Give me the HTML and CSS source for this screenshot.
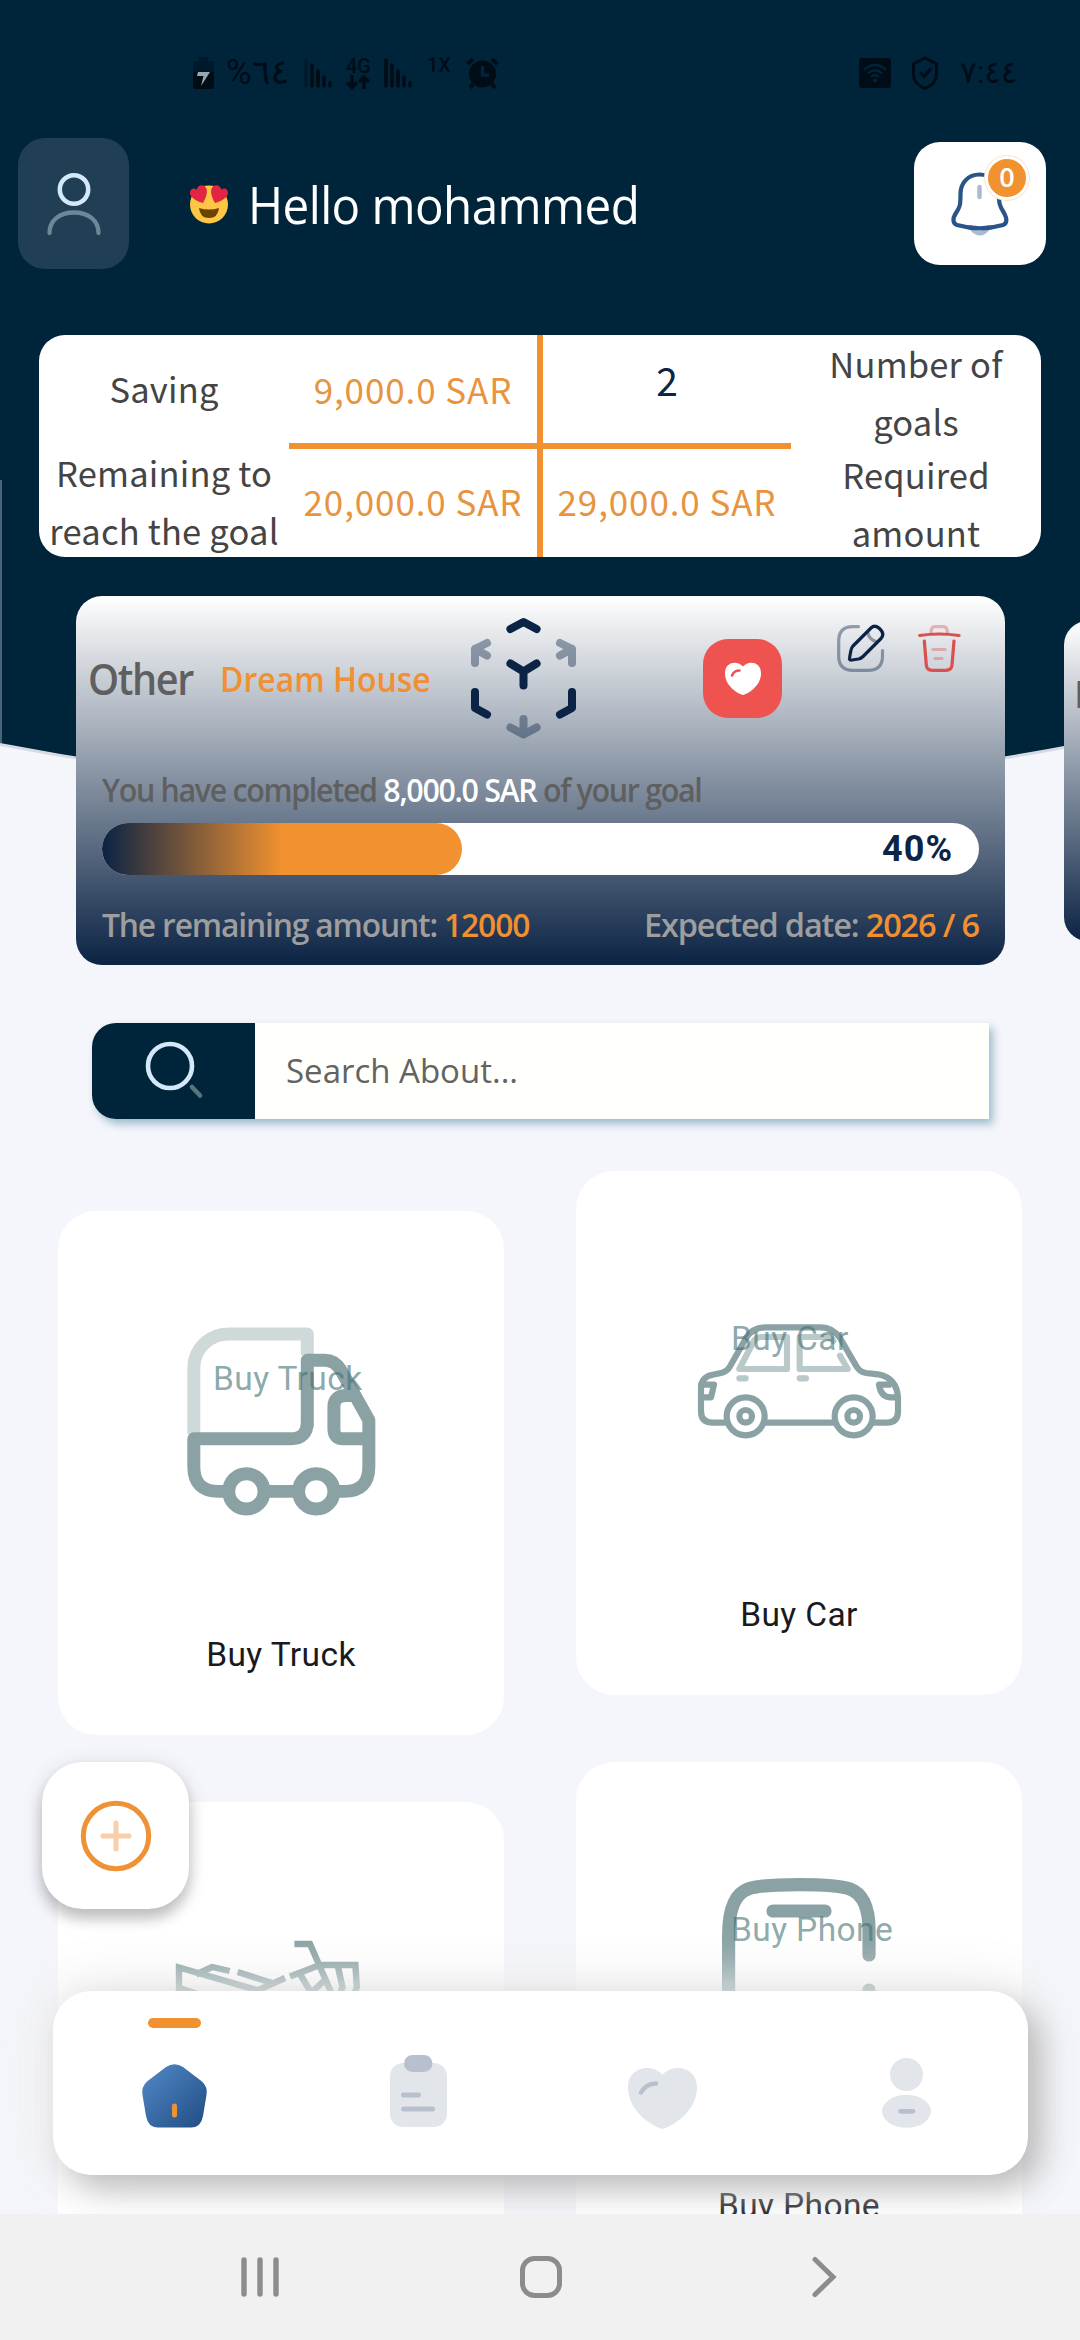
FILE: index.html
```html
<!DOCTYPE html>
<html lang="en">
<head>
<meta charset="utf-8">
<title>Savings goals</title>
<link rel="stylesheet" href="styles.css">
</head>
<body>
<div class="phone">
  <svg class="backdrop" viewBox="0 0 1080 810" aria-hidden="true">
    <path d="M0 746Q540 850 1080 746V0H0Z" fill="#d5dce4"/>
    <path d="M0 743Q540 847 1080 743V0H0Z" fill="#00243a"/>
    <path d="M1 480V743" stroke="#4a6577" stroke-width="2"/>
  </svg>

  <div class="status-bar">
    <svg class="st-battery" width="21" height="32" viewBox="0 0 21 32"><path d="M0 6Q0 4 2 4H6V0H15V4H19Q21 4 21 6V15H0Z" fill="#00192a"/><path d="M0 15H21V30Q21 32 19 32H2Q0 32 0 30Z" fill="#000d16"/><path d="M5 15H17L8 29L10.500 19H4Z" fill="#9aa7b1"/></svg>
    <span class="st-percent">%٦٤</span>
    <svg class="st-signal" width="28" height="30" viewBox="0 0 28 30" stroke="#000d16" stroke-width="3.600" stroke-linecap="round"><path d="M2 2V28" stroke="#001a2b"/><path d="M8 7V28M14 13V28M20 19V28M26 25V28"/></svg>
    <span class="st-net"><span>4G</span><svg width="24" height="15" viewBox="0 0 24 15" fill="none" stroke="#000d16" stroke-width="3.500"><path d="M6 0V12M1 7.500L6 12.500L11 7.500M18 14V2M13 7L18 2L23 7"/></svg></span>
    <svg class="st-signal2" width="28" height="30" viewBox="0 0 28 30" stroke="#000d16" stroke-width="3.600" stroke-linecap="round"><path d="M2 2V28M8 7V28M14 13V28M20 19V28M26 25V28"/></svg>
    <span class="st-1x">1X</span>
    <svg class="st-alarm" width="33" height="32" viewBox="0 0 33 32"><circle cx="16.500" cy="17" r="13.500" fill="#000d16"/><path d="M1.500 7L7 2M31.500 7L26 2M7 27L4 31M26 27L29 31" stroke="#000d16" stroke-width="4" /><path d="M16.500 9V18H23" fill="none" stroke="#00243a" stroke-width="3.500"/></svg>
    <svg class="st-wifi" width="32" height="30" viewBox="0 0 32 30"><rect width="32" height="30" rx="3" fill="#000d16"/><path d="M5 12Q16 2 27 12M8.500 15.500Q16 9 23.500 15.500M12 19Q16 15.500 20 19" fill="none" stroke="#00243a" stroke-width="2.300"/><circle cx="16" cy="22.500" r="2" fill="#00243a"/></svg>
    <svg class="st-shield" width="26" height="34" viewBox="0 0 26 34" fill="none" stroke="#000d16"><path d="M13 2L24.500 8V19Q24 28 13 32.500Q2 28 1.500 19V8Z" stroke-width="3"/><path d="M8 16.500L12 20.500L19 12.500" stroke-width="3.400"/></svg>
    <span class="st-time">٧:٤٤</span>
  </div>

  <header class="header">
    <div class="avatar">
      <svg width="54" height="62" viewBox="0 0 54 62" fill="none" stroke-linecap="round"><circle cx="27" cy="16.500" r="14.200" stroke="#d3e8f8" stroke-width="4.500"/><path d="M2.500 60C2.500 47 13 39.500 27 39.500S51.500 47 51.500 60" stroke="#6b8798" stroke-width="4.300"/></svg>
    </div>
    <svg class="emoji" width="40" height="40" viewBox="0 0 40 40"><circle cx="20" cy="20.500" r="19" fill="#fdc745"/><path d="M10 24Q20 27 30 24Q29 34 20 34Q11 34 10 24Z" fill="#6b4300"/><path d="M14 19C7 17 .5 13 1 8.500C1.500 4 5 3.500 7.500 5.500C9 1 13 0 16 2.500C20 6 17 14 14 19ZM26 19C33 17 39.500 13 39 8.500C38.500 4 35 3.500 32.500 5.500C31 1 27 0 24 2.500C20 6 23 14 26 19Z" fill="#e12543"/></svg>
    <h1 class="greeting">Hello mohammed</h1>
    <div class="bell">
      <svg width="62" height="68" viewBox="0 0 62 68" fill="none" stroke-linecap="round"><path d="M22 57.500Q30.500 69 39.500 57.500" stroke="#a9bad1" stroke-width="4.500"/><path d="M30.500 17V27" stroke="#a9bad1" stroke-width="4.500"/><path d="M30.500 4.500C19 4.500 11.500 13 11.500 24C11.500 35 11 37 7 43C3 49 4 53.500 8 55C23 59.300 39 59.300 54 55C58 53.500 58.500 49 55 43C50.500 36 50 33 49.700 24C49.700 13 42 4.500 30.500 4.500Z" stroke="#285489" stroke-width="4.200"/></svg>
      <span class="badge">0</span>
    </div>
  </header>

  <section class="summary">
    <div class="cell label saving">Saving</div>
    <div class="cell amount c-tl">9,000.0 SAR</div>
    <div class="cell count c-tr">2</div>
    <div class="cell label low">Number of<br>goals</div>
    <div class="cell label">Remaining to<br>reach the goal</div>
    <div class="cell amount c-bl">20,000.0 SAR</div>
    <div class="cell amount c-br">29,000.0 SAR</div>
    <div class="cell label low">Required<br>amount</div>
  </section>

  <section class="carousel">
    <article class="goal">
      <div class="goal-head">
        <span class="goal-type">Other</span>
        <span class="goal-name">Dream House</span>
        <svg class="cube" width="107" height="122" viewBox="0 0 107 122" fill="none" stroke="#0b2344" stroke-width="8" stroke-linecap="round" stroke-linejoin="round"><path d="M40.400 12L53.500 5L66.600 12M40.400 46.500L53.500 54.500L66.600 46.500M53.500 54.500V68.500M5 75V91L17 97.500M102 75V91L90 97.500"/><g opacity=".4"><path d="M17 26L5 32V46M5 32L17 38.500M90 26L102 32V46M102 32L90 38.500M53.500 102V117M40.400 110.500L53.500 117.500L66.600 110.500"/></g></svg>
        <button class="fav"><svg width="36" height="33" viewBox="0 0 36 33"><path d="M18 4.500C13-1.500 0-1 0 11.500C0 23 11 31 18 33C25 31 36 23 36 11.500C36-1 23-1.500 18 4.500Z" fill="#fff"/><path d="M7 13.500Q9 8.500 14.500 8.500" fill="none" stroke="#ef5350" stroke-width="2.600" stroke-linecap="round"/></svg></button>
        <svg class="edit" width="47" height="47" viewBox="0 0 47 47" fill="none" stroke="#0b2344" stroke-width="3.200" stroke-linecap="round" stroke-linejoin="round"><g opacity=".4"><path d="M21.500 1.700H16Q1.700 1.700 1.700 16V31Q1.700 45.300 16 45.300H31Q45.500 45.300 45.500 31V25.500M31 8Q32 14.500 39 16.500"/></g><path d="M12.500 33L14 25Q14.300 23 16 21L34 3Q38-1 43 4Q48 9 44 13.500L26 31.500Q24 33.500 21.500 34L15 35Q12 35.300 12.500 33Z"/></svg>
        <svg class="trash" width="43" height="47" viewBox="0 0 43 47" fill="none" stroke="#d9504f" stroke-width="3.200" stroke-linecap="round" stroke-linejoin="round"><path d="M1.700 10.500Q21 7.500 41 10.500M6.300 16L8.300 40Q8.800 45.300 14 45.300H28Q33.500 45.300 34 40L36 16"/><g opacity=".38"><path d="M12.800 8L13.300 5Q13.800 1.700 17 1.700H25Q28.500 1.700 29 5L29.500 8M15 24.500H27M17 33.500H24"/></g></svg>
      </div>
      <p class="progress-text">You have completed <b>8,000.0 SAR</b> of your goal</p>
      <div class="bar"><div class="fill" style="width:41%"></div><span class="percent">40%</span></div>
      <div class="goal-foot">
        <span class="remaining">The remaining amount: <b>12000</b></span>
        <span class="expected">Expected date: <b>2026 / 6</b></span>
      </div>
    </article>
    <article class="goal-next"><span>D</span></article>
  </section>

  <div class="search">
    <div class="search-btn"><svg width="62" height="62" viewBox="0 0 62 62" fill="none" stroke-linecap="round"><circle cx="27" cy="26" r="22" stroke="#d3e8f8" stroke-width="4.600"/><path d="M49 47L57 55.500" stroke="#56737f" stroke-width="4.600"/></svg></div>
    <span class="search-text">Search About...</span>
  </div>

  <main class="grid">
    <div class="col col-left">
      <div class="tile">
        <div class="tile-icon"><svg width="189" height="189" viewBox="111 140 567 568" fill="none" stroke="#8aa2a4" stroke-width="39" stroke-linejoin="round"><path d="M131 462V262A104 101 0 0 1 235 161H472V225" stroke="#d0d9da"/><path d="M472 440V240H525Q553 240 572 268L657 420V560Q657 634 583 634H560M472 240V425Q472 476 422 476H131V560Q131 634 205 634H230M350 634H436M606 346H590Q552 346 552 380V446Q552 476 580 476H657"/><circle cx="289" cy="634" r="53"/><circle cx="499" cy="634" r="53"/></svg></div>
        <span class="tile-label">Buy Truck</span>
        <span class="ghost">Buy Truck</span>
      </div>
      <div class="tile">
        <div class="tile-icon"><svg width="210" height="144" viewBox="0 0 210 144" fill="none" stroke="#8aa2a4" stroke-width="6.400"><path d="M118.400 3H134L158 58M114 35.400L144 24H179.400L180.800 46L172 70M162 26L166.500 46L160 64M124 33L140 60M147.700 40L133 54M20 33.500L36 26L53.700 30M61.600 31L96 42M3 62V26.400L81.600 49.400L109 37M3 47L40 59"/><circle cx="45" cy="106" r="34"/><circle cx="165" cy="106" r="34"/></svg></div>
      </div>
    </div>
    <div class="col col-right">
      <div class="tile">
        <div class="tile-icon"><svg width="203" height="115" viewBox="171 193 609 345" fill="none" stroke="#8aa2a4" stroke-width="18.500" stroke-linejoin="round" stroke-linecap="round"><path stroke="#b9c8c8" d="M438 232H362Q345 232 337 247L295 328H438ZM597 288L620 328H476V232H555Q570 232 577 244M295 356H314M476 356H495"/><path d="M255 489H215Q180 489 180 455V385Q180 352 215 345L240 340Q258 336 266 322L315 235Q335 203 375 203H540Q575 203 597 235L645 318Q655 337 675 340L710 344Q771 355 771 420V455Q771 489 738 489H700M376 489H578M180 375H219L210 413H180M771 413H750Q720 413 714 375H745"/><circle cx="314" cy="470" r="57"/><circle cx="638" cy="470" r="57"/><circle cx="314" cy="470" r="19"/><circle cx="638" cy="470" r="19"/></svg></div>
        <span class="tile-label">Buy Car</span>
        <span class="ghost">Buy Car</span>
      </div>
      <div class="tile">
        <div class="tile-icon"><svg width="154" height="189" viewBox="0 0 154 189" fill="none" stroke="#8aa2a4" stroke-width="13.200" stroke-linecap="round"><path d="M147 77V52Q147 18 128 11Q116 6.600 77 6.600T26 11Q6.600 18 6.600 58V137Q6.600 182 50 182H104Q147 182 147 137V112M51 33H103"/></svg></div>
        <span class="tile-label">Buy Phone</span>
        <span class="ghost">Buy Phone</span>
      </div>
    </div>
  </main>

  <button class="fab"><svg width="72" height="72" viewBox="0 0 72 72" fill="none" stroke="#ef9237" stroke-width="5" stroke-linecap="round"><circle cx="36" cy="36" r="32.700"/><path d="M36 23V49M23 36H49" stroke="#f8cfa9"/></svg></button>

  <nav class="tabs">
    <div class="tab active"><svg width="65" height="64" viewBox="0 0 65 64"><defs><linearGradient id="home" x1="0" y1="0" x2="1" y2="1"><stop offset=".1" stop-color="#4d84c2"/><stop offset="1" stop-color="#214c82"/></linearGradient></defs><path d="M24 3Q32.500-2.500 41 3L60 17.500Q66 23 64.500 31L61 52Q59 63.500 49 63.500H16Q6 63.500 4 52L.5 31Q-1 23 5 17.500Z" fill="url(#home)"/><path d="M32.500 42V51" stroke="#ef9237" stroke-width="5" stroke-linecap="round"/></svg></div>
    <div class="tab"><svg width="57" height="72" viewBox="0 0 57 72"><rect y="8" width="57" height="64" rx="13" fill="#e2e6eb"/><rect x="14" width="28.500" height="17" rx="8.500" fill="#b9c0cd"/><path d="M13.500 40H28.500M13.500 54H42.500" stroke="#b9c0cd" stroke-width="5" stroke-linecap="round"/></svg></div>
    <div class="tab"><svg width="69" height="62" viewBox="0 0 69 62"><path d="M34.500 8C25-4 0-1 0 20.500C0 43 22 58.500 34.500 62C47 58.500 69 43 69 20.500C69-1 44-4 34.500 8Z" fill="#e2e6eb"/><path d="M13 25.500Q18 16.500 28 16.500" fill="none" stroke="#b9c0cd" stroke-width="4.500" stroke-linecap="round"/></svg></div>
    <div class="tab"><svg width="49" height="70" viewBox="0 0 49 70"><circle cx="24.500" cy="16.500" r="16.500" fill="#e2e6eb"/><ellipse cx="24.500" cy="53.300" rx="24.500" ry="16.500" fill="#e2e6eb"/><path d="M18.500 53.300H31" stroke="#b9c0cd" stroke-width="4.700" stroke-linecap="round"/></svg></div>
  </nav>

  <footer class="sysbar">
    <svg width="40" height="42" viewBox="0 0 40 42" stroke="#8c8c8c" stroke-width="5.400" stroke-linecap="round"><path d="M4 4V38M20 4V38M36 4V38"/></svg>
    <svg width="44" height="44" viewBox="0 0 44 44"><rect x="3.500" y="3.500" width="37" height="37" rx="12" fill="none" stroke="#8c8c8c" stroke-width="5"/></svg>
    <svg width="26" height="42" viewBox="0 0 26 42" fill="none" stroke="#8c8c8c" stroke-width="5" stroke-linecap="round"><path d="M4 3.500L22 21L4 38.500"/></svg>
  </footer>
</div>
</body>
</html>
```
FILE: styles.css
```css
* { box-sizing: border-box; margin: 0; padding: 0; }
body { width: 1080px; height: 2340px; overflow: hidden; }
svg { display: block; overflow: visible; flex: none; }
button { border: 0; }

.phone {
  position: relative;
  display: flex;
  flex-direction: column;
  width: 1080px;
  height: 2340px;
  overflow: hidden;
  background: #f5f6fb;
  font-family: "Open Sans", sans-serif;
}
.backdrop { position: absolute; left: 0; top: 0; width: 1080px; height: 810px; }

/* status bar */
.status-bar {
  position: relative;
  display: flex;
  align-items: center;
  height: 138px;
  padding: 8px 0 0 193px;
  color: #000d16;
  font-family: Roboto, "DejaVu Sans", sans-serif;
}
.st-percent { width: 78px; margin-left: 12px; font-size: 35px; line-height: 40px; white-space: nowrap; }
.st-net { width: 24px; margin-left: 14px; font-size: 20px; font-weight: 500; line-height: 18px; }
.st-signal2 { margin-left: 14px; }
.st-1x { margin: 0 0 17px 15px; width: 24px; font-size: 20px; font-weight: 500; line-height: 18px; }
.st-alarm { margin-left: 15px; }
.st-wifi { margin-left: 360px; }
.st-shield { margin-left: 21px; }
.st-time { margin-left: 22px; font-size: 31px; line-height: 40px; white-space: nowrap; }

/* header */
.header { position: relative; display: flex; align-items: center; height: 131px; padding: 0 34px 0 18px; }
.avatar {
  display: flex; justify-content: center; align-items: center;
  width: 111px; height: 131px; border-radius: 27px; background: #213f54;
}
.emoji { margin-left: 60px; }
.greeting {
  margin-left: 19px; color: #fff; font-size: 52px; font-weight: 400; letter-spacing: -0.6px; line-height: 70px; white-space: nowrap;
  transform: scaleX(.915); transform-origin: left;
}
.bell {
  position: relative;
  display: flex; justify-content: center; align-items: center;
  width: 132px; height: 123px; margin-left: auto; border-radius: 26px; background: #fff;
}
.badge {
  position: absolute; left: 71px; top: 14px;
  width: 44px; height: 44px; border: 3.5px solid #fff; border-radius: 50%;
  box-shadow: 0 0 0 1px #fbe4cc;
  background: #f1912f; color: #fff; font-size: 27px; font-weight: 600; line-height: 36px; text-align: center;
}

/* summary table */
.summary {
  position: relative;
  display: grid;
  grid-template-columns: 250px 251px 251px 250px;
  grid-template-rows: 111px 111px;
  width: 1002px; height: 222px; margin: 66px 0 0 39px;
  border-radius: 26px; background: #fff; overflow: hidden;
  font-family: "Noto Sans CJK SC", sans-serif;
}
.cell { display: flex; align-items: center; justify-content: center; text-align: center; white-space: nowrap; }
.label { font-size: 34.5px; line-height: 57.5px; color: #444; letter-spacing: 0.2px; }
.saving { padding-bottom: 3px; }
.low { padding-top: 4px; }
.amount { font-size: 35px; line-height: 50px; color: #e8943e; letter-spacing: 0.9px; }
.count { font-size: 39px; line-height: 50px; color: #0d2545; padding-bottom: 21px; }
.c-tl, .c-bl { border-right: 3px solid #f1912f; }
.c-tr, .c-br { border-left: 3px solid #f1912f; }
.c-tl, .c-tr { border-bottom: 3px solid #f1912f; }
.c-bl, .c-br { border-top: 3px solid #f1912f; padding-bottom: 4px; }

/* goals carousel */
.carousel { position: relative; display: flex; align-items: center; height: 369px; margin: 39px 0 0 76px; }
.goal {
  display: flex; flex-direction: column; flex: none;
  width: 929px; height: 369px; border-radius: 26px;
  background: linear-gradient(#fff, #0b2344);
}
.goal-head { display: flex; align-items: center; height: 164px; padding-left: 12px; font-weight: 600; white-space: nowrap; }
.goal-type { width: 132px; padding-top: 1px; font-size: 43px; color: #5f5f5f; letter-spacing: -1.5px; transform: scaleX(.92); transform-origin: left; }
.goal-name { width: 250px; padding-top: 1px; font-size: 34px; color: #f09030; transform: scaleX(.94); transform-origin: left; }
.fav {
  display: flex; align-items: center; justify-content: center; flex: none;
  width: 79px; height: 79px; margin-left: 126px; border-radius: 25px; background: #ef5350;
}
.edit { margin: 0 0 60px 55px; }
.trash { margin: 0 0 60px 34px; }
.progress-text {
  height: 59px; margin-left: 26px; font-size: 32px; font-weight: 600; line-height: 60px; color: #5f5f5f; letter-spacing: -1.4px; white-space: nowrap;
  transform: scaleX(.951); transform-origin: left;
}
.progress-text b { color: #fff; font-weight: 600; }
.bar { display: flex; align-items: center; width: 877px; height: 52px; margin: 4px 0 0 26px; border-radius: 26px; background: #fff; }
.fill { height: 52px; border-radius: 26px; background: linear-gradient(90deg, #0b2344, #f1912f 50%); }
.percent { margin: 0 26px 0 auto; font-family: Roboto, sans-serif; font-size: 36px; font-weight: 700; color: #0d2545; letter-spacing: 1px; }
.goal-foot { display: flex; justify-content: space-between; height: 90px; padding: 9px 26px 0; font-size: 33px; font-weight: 600; line-height: 81px; color: #9e9e9e; letter-spacing: -1.2px; white-space: nowrap; }
.goal-foot b { color: #f09030; font-weight: 600; }
.remaining { transform: scaleX(.963); transform-origin: left; }
.expected { transform: scaleX(.985); transform-origin: right; }
.goal-next {
  flex: none;
  width: 806px; height: 320px; margin-left: 59px; padding: 46px 0 0 10px;
  border-radius: 24px; background: linear-gradient(#fff, #0b2344);
  color: #5f5f5f; font-size: 38px; font-weight: 600;
}

/* search */
.search {
  position: relative;
  display: flex; align-items: center;
  width: 897px; height: 96px; margin: 58px 0 0 92px;
  border-radius: 24px 0 0 24px; background: #fffffb;
  box-shadow: 4px 5px 8px rgba(110, 155, 180, .65);
}
.search-btn { display: flex; align-items: center; justify-content: center; width: 163px; height: 96px; border-radius: 24px 0 0 24px; background: #00243a; }
.search-text { margin-left: 31px; font-size: 33px; color: #636363; line-height: 50px; }

/* category grid */
.grid { display: flex; gap: 72px; height: 1095px; padding: 52px 0 0 58px; overflow: hidden; }
.col { display: flex; flex-direction: column; gap: 67px; }
.col-left { padding-top: 40px; }
.tile { position: relative; flex: none; display: flex; flex-direction: column; width: 446px; height: 524px; border-radius: 38px; background: #fff; }
.tile-icon { display: flex; align-items: center; justify-content: center; height: 421px; }
.tile-label, .ghost { font-family: Roboto, sans-serif; font-size: 33.5px; line-height: 45px; letter-spacing: 0.4px; white-space: nowrap; }
.tile-label { text-align: center; color: #1a1a1e; }
.ghost { position: absolute; left: 155px; top: 145px; color: rgba(68, 112, 114, .62); }

/* floating controls */
.fab {
  position: absolute; left: 42px; top: 1762px;
  display: flex; align-items: center; justify-content: center;
  width: 147px; height: 147px; border-radius: 41px; background: #fff;
  box-shadow: 0 10px 14px rgba(0, 0, 0, .2), 0 3px 22px rgba(0, 0, 0, .12);
}
.tabs {
  position: absolute; left: 53px; top: 1991px;
  display: flex; align-items: center;
  width: 975px; height: 184px; border-radius: 38px; background: #fff;
  box-shadow: 14px 14px 30px rgba(120, 120, 120, .42), 0 0 48px 12px rgba(236, 236, 236, .95);
}
.tab { position: relative; display: flex; justify-content: center; flex: 1; padding-top: 26px; }
.tab:nth-child(2) { padding-top: 15px; }
.tab:nth-child(3) { padding-top: 30px; }
.tab:nth-child(4) { padding-top: 20px; }
.active::before { content: ""; position: absolute; left: 95px; top: -20px; width: 53px; height: 10px; border-radius: 5px; background: #f1912f; }

/* system navigation */
.sysbar {
  position: relative;
  display: flex; align-items: center;
  height: 126px; margin-top: auto; padding-left: 240px; background: #f1f1f1;
}
.sysbar svg:nth-child(2) { margin-left: 239px; }
.sysbar svg:nth-child(3) { margin-left: 248px; }
```
